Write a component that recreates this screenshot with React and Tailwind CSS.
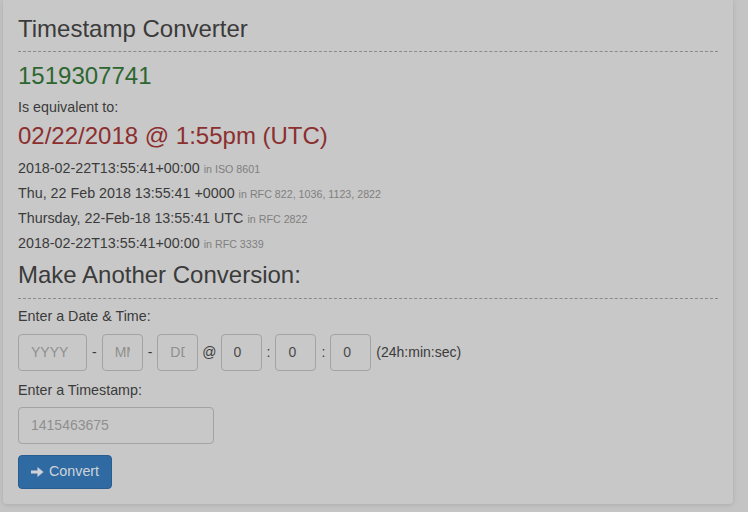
import React from "react";

const font = { fontFamily: '"Liberation Sans", Arial, Helvetica, sans-serif' };

function Line({ main, note }) {
  return (
    <div className="h-[25px] leading-[25px] text-[14.3px] text-[#3b3b3b] whitespace-nowrap">
      {main} <span className="text-[10.7px] text-[#7f7f7f]">{note}</span>
    </div>
  );
}

function Box({ w, placeholder, value }) {
  return (
    <div
      className={`h-[37px] ${w} shrink-0 rounded-[4px] border border-[#a3a3a3] flex items-center px-[12px] text-[14px] whitespace-nowrap`}
    >
      <div className="min-w-0 w-full overflow-hidden">
        {value !== undefined ? (
          <span className="text-[#4a4a4a]">{value}</span>
        ) : (
          <span className="text-[#8f8f8f]">{placeholder}</span>
        )}
      </div>
    </div>
  );
}

function Sep({ children }) {
  return <span className="px-[5px] text-[14px] text-[#3b3b3b]">{children}</span>;
}

export default function App() {
  return (
    <div className="w-[748px] h-[512px] bg-[#c4c4c4] overflow-hidden" style={font}>
      <div className="ml-[3px] w-[730px] h-[504px] bg-[#c8c8c8] rounded-b-[4px] shadow-[0_1px_5px_rgba(0,0,0,0.13)] px-[15px] pt-[16px]">
        <h3 className="text-[24px] leading-[26px] text-[#3b3b3b] pb-[9px] border-b border-dashed border-[#8a8a8a]">
          Timestamp Converter
        </h3>
        <div className="mt-[11px] text-[24px] leading-[26px] text-[#2d6631]">1519307741</div>
        <div className="mt-[8px] text-[14.3px] leading-[20px] text-[#3b3b3b]">Is equivalent to:</div>
        <div className="mt-[6px] text-[24px] leading-[26px] text-[#8c2f2f]">02/22/2018 @ 1:55pm (UTC)</div>
        <div className="mt-[7px]">
          <Line main="2018-02-22T13:55:41+00:00" note="in ISO 8601" />
          <Line main="Thu, 22 Feb 2018 13:55:41 +0000" note="in RFC 822, 1036, 1123, 2822" />
          <Line main="Thursday, 22-Feb-18 13:55:41 UTC" note="in RFC 2822" />
          <Line main="2018-02-22T13:55:41+00:00" note="in RFC 3339" />
        </div>
        <h3 className="mt-[6px] text-[24px] leading-[26px] text-[#3b3b3b] pb-[10px] border-b border-dashed border-[#8a8a8a]">
          Make Another Conversion:
        </h3>
        <div className="mt-[7px] text-[14.3px] leading-[20px] text-[#3b3b3b]">Enter a Date &amp; Time:</div>
        <div className="mt-[8px] flex items-center">
          <Box w="w-[69px]" placeholder="YYYY" />
          <Sep>-</Sep>
          <Box w="w-[41px]" placeholder="MM" />
          <Sep>-</Sep>
          <Box w="w-[41px]" placeholder="DD" />
          <span className="px-[4px] text-[14px] text-[#3b3b3b]">@</span>
          <Box w="w-[41px]" value="0" />
          <Sep>:</Sep>
          <Box w="w-[41px]" value="0" />
          <Sep>:</Sep>
          <Box w="w-[41px]" value="0" />
          <span className="pl-[5px] text-[14px] text-[#3b3b3b]">(24h:min:sec)</span>
        </div>
        <div className="mt-[9px] text-[14.3px] leading-[20px] text-[#3b3b3b]">Enter a Timestamp:</div>
        <div className="mt-[7px]">
          <Box w="w-[196px]" placeholder="1415463675" />
        </div>
        <button className="mt-[11px] h-[34px] w-[94px] rounded-[4px] bg-[#2f6ba2] border border-[#295d8e] flex items-center pl-[12px] text-[14.3px] text-[#cfd3d8]">
          <svg width="13" height="12" viewBox="0 0 13 12" className="mr-[5px]">
            <path d="M0 4.5h6.5V1L12.5 6 6.5 11V7.5H0z" fill="#cfd3d8" />
          </svg>
          Convert
        </button>
      </div>
    </div>
  );
}
